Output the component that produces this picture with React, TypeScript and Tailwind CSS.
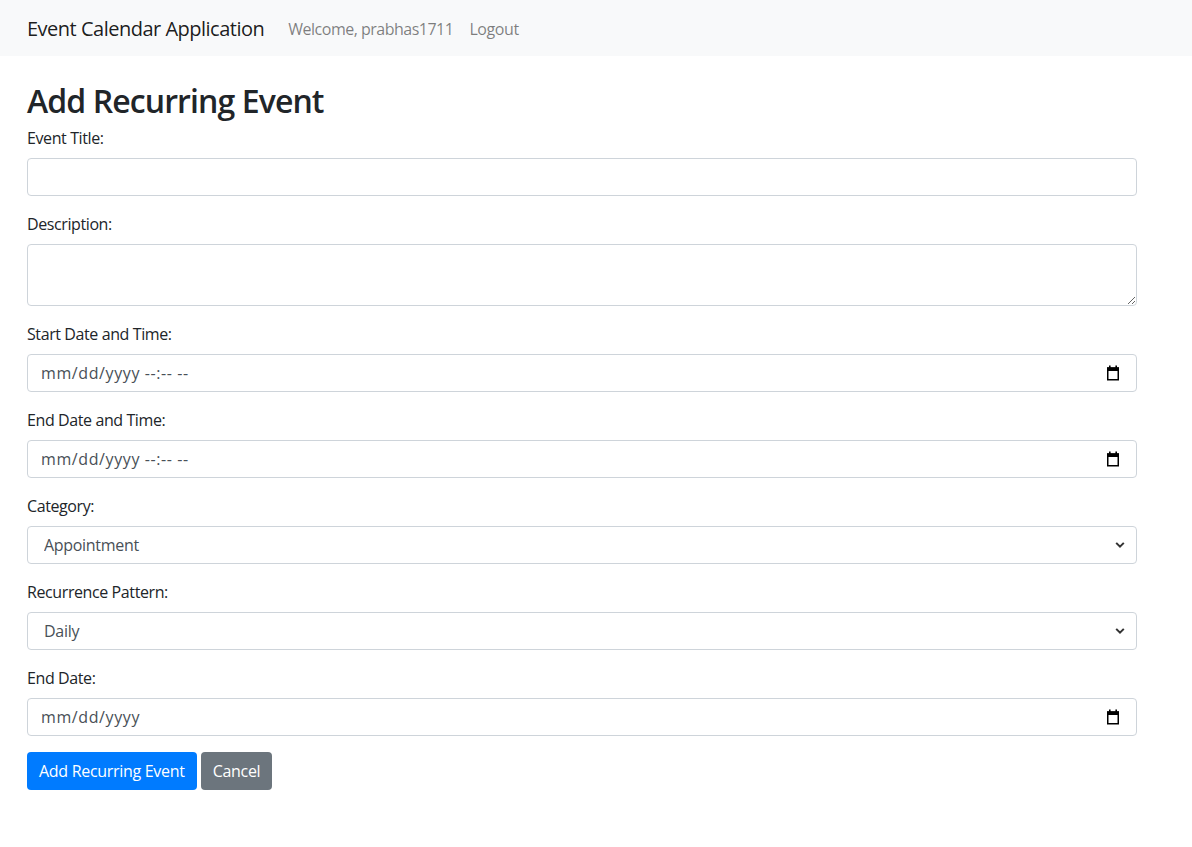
import React from 'react';

const font = { fontFamily: '"Segoe UI", "Open Sans", "Noto Sans", sans-serif' };

function CalendarIcon() {
  return (
    <svg width="14" height="16" viewBox="0 0 14 16" className="shrink-0">
      <rect x="3" y="0.5" width="1.6" height="3" fill="#000" />
      <rect x="9.4" y="0.5" width="1.6" height="3" fill="#000" />
      <rect x="1" y="2.5" width="12" height="3.5" fill="#000" />
      <rect x="1.75" y="3" width="10.5" height="11.75" fill="none" stroke="#000" strokeWidth="1.5" />
    </svg>
  );
}

function Chevron() {
  return (
    <svg width="10" height="7" viewBox="0 0 10 7" className="pointer-events-none absolute right-[12px] top-1/2 -translate-y-1/2">
      <path d="M1.2 1.4 L5 5.2 L8.8 1.4" fill="none" stroke="#333" strokeWidth="2" />
    </svg>
  );
}

function Label({ children }: { children: React.ReactNode }) {
  return <label className="mb-2 block text-[16px] leading-6 tracking-[-0.4px] text-[#212529]">{children}</label>;
}

function DateField({ text }: { text: string }) {
  return (
    <div className="flex h-[38px] w-full items-center justify-between rounded-[4px] border border-[#ced4da] bg-white pl-[13px] pr-[16px] text-[16px] text-[#495057]">
      <span className="tracking-[0.6px]">{text}</span>
      <CalendarIcon />
    </div>
  );
}

function SelectField({ value, options }: { value: string; options: string[] }) {
  return (
    <div className="relative">
      <select
        defaultValue={value}
        style={font}
        className="h-[38px] w-full appearance-none rounded-[4px] border border-[#ced4da] bg-white pl-[16px] pr-8 text-[16px] tracking-[-0.3px] text-[#495057] outline-none"
      >
        {options.map((o) => (
          <option key={o}>{o}</option>
        ))}
      </select>
      <Chevron />
    </div>
  );
}

export default function App() {
  return (
    <div className="min-h-screen bg-white text-[#212529]" style={font}>
      {/* navbar */}
      <nav className="flex h-14 items-center bg-[#f8f9fa] px-[27px] pt-[2px]">
        <span className="mr-[24px] text-[20px] leading-[30px] tracking-[-0.5px] text-black/90">Event Calendar Application</span>
        <span className="mr-[16px] text-[16px] tracking-[-0.5px] text-black/50">Welcome, prabhas1711</span>
        <a href="#" className="text-[16px] tracking-[-0.4px] text-black/50">Logout</a>
      </nav>

      <div className="w-[1110px] pl-[27px] pt-[26px] box-content">
        <h2 className="mb-[6px] text-[32px] font-semibold leading-[38px] tracking-[-0.9px] text-[#212529]">Add Recurring Event</h2>

        <form>
          <div className="mb-4">
            <Label>Event Title:</Label>
            <input type="text" className="h-[38px] w-full rounded-[4px] border border-[#ced4da] bg-white px-3 text-[16px] outline-none" />
          </div>

          <div className="mb-4">
            <Label>Description:</Label>
            <textarea rows={2} className="block h-[62px] w-full rounded-[4px] border border-[#ced4da] bg-white px-3 py-1.5 text-[16px] outline-none" />
          </div>

          <div className="mb-4">
            <Label>Start Date and Time:</Label>
            <DateField text="mm/dd/yyyy --:-- --" />
          </div>

          <div className="mb-4">
            <Label>End Date and Time:</Label>
            <DateField text="mm/dd/yyyy --:-- --" />
          </div>

          <div className="mb-4">
            <Label>Category:</Label>
            <SelectField value="Appointment" options={['Appointment', 'Meeting', 'Birthday', 'Reminder', 'Other']} />
          </div>

          <div className="mb-4">
            <Label>Recurrence Pattern:</Label>
            <SelectField value="Daily" options={['Daily', 'Weekly', 'Monthly', 'Yearly']} />
          </div>

          <div className="mb-4">
            <Label>End Date:</Label>
            <DateField text="mm/dd/yyyy" />
          </div>

          <div className="flex gap-1">
            <button type="button" className="h-[38px] rounded-[4px] bg-[#007bff] px-3 text-[16px] tracking-[-0.3px] text-white">
              Add Recurring Event
            </button>
            <button type="button" className="h-[38px] rounded-[4px] bg-[#6c757d] px-3 text-[16px] tracking-[-0.3px] text-white">
              Cancel
            </button>
          </div>
        </form>
      </div>
    </div>
  );
}
